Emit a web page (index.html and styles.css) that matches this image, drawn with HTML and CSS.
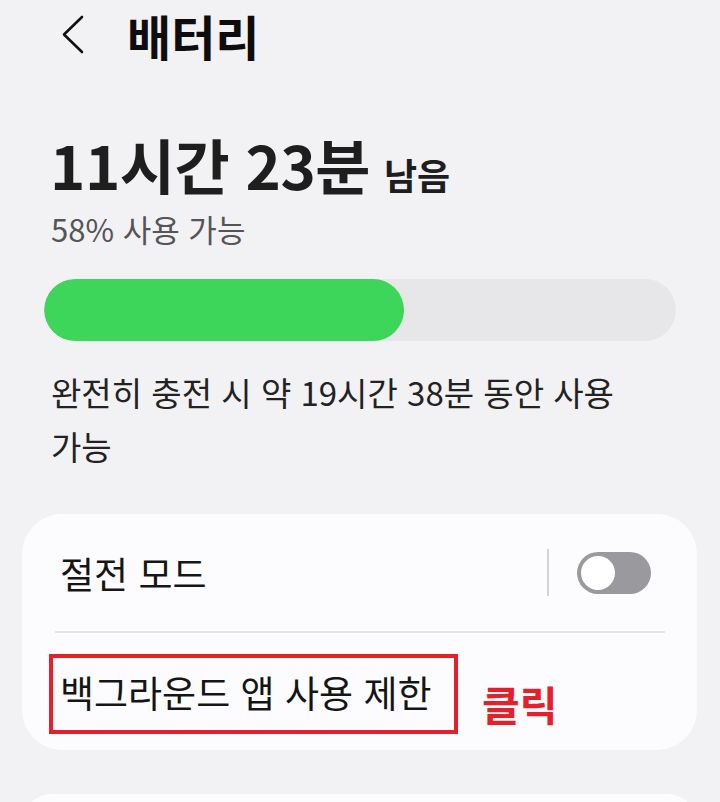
FILE: index.html
```html
<!DOCTYPE html>
<html lang="ko">
<head>
<meta charset="utf-8">
<link rel="stylesheet" href="styles.css">
</head>
<body>
<div class="screen">
  <header class="header">
    <svg class="back" width="24" height="42" viewBox="0 0 24 42"><path d="M20 3 L2 20.5 L20 38" fill="none" stroke="#111" stroke-width="2.6" stroke-linecap="round" stroke-linejoin="round"/></svg>
    <h1 class="title">배터리</h1>
  </header>
  <section class="summary">
    <div class="remain"><span class="big">11시간 23분</span><span class="left">남음</span></div>
    <div class="avail">58% 사용 가능</div>
  </section>
  <div class="bar"><div class="fill" style="width:57%"></div></div>
  <p class="desc">완전히 충전 시 약 19시간 38분 동안 사용 가능</p>
  <div class="card">
    <div class="row row-toggle">
      <span class="label">절전 모드</span>
      <div class="ctrl">
        <span class="vline"></span>
        <span class="toggle"><span class="knob"></span></span>
      </div>
    </div>
    <div class="sep"></div>
    <div class="row row-bg">
      <div class="mark"><span class="label">백그라운드 앱 사용 제한</span></div>
      <span class="click">클릭</span>
    </div>
  </div>
  <div class="card card-next"></div>
</div>
</body>
</html>
```
FILE: styles.css
```css
html, body {
  margin: 0;
  padding: 0;
  background: #f2f2f4;
}
.screen {
  width: 720px;
  height: 802px;
  overflow: hidden;
  font-family: "Noto Sans CJK KR", "Noto Sans", sans-serif;
  color: #1c1c1c;
}
.header {
  height: 70px;
  display: flex;
  align-items: center;
}
.back {
  margin-left: 62px;
  flex: none;
}
.title {
  margin: 0 0 0 41px;
  font-size: 48px;
  font-weight: 700;
  line-height: 70px;
  color: #0d0d0d;
}
.summary {
  margin-top: 63px;
  padding-left: 50px;
}
.remain {
  display: flex;
  align-items: baseline;
  height: 62px;
  line-height: 62px;
}
.big {
  font-size: 60px;
  font-weight: 700;
  letter-spacing: -0.5px;
  color: #1e1e1e;
}
.left {
  font-size: 36px;
  font-weight: 700;
  margin-left: 14px;
  color: #1e1e1e;
}
.avail {
  margin-top: 15px;
  font-size: 31px;
  line-height: 38px;
  color: #555558;
  padding-left: 1px;
}
.bar {
  margin: 31px 0 0 44px;
  width: 632px;
  height: 62px;
  border-radius: 31px;
  background: #e7e7e9;
  overflow: hidden;
}
.fill {
  height: 100%;
  background: #3dd65a;
  border-radius: 31px;
}
.desc {
  margin: 24px 0 0 51px;
  width: 590px;
  font-size: 33px;
  line-height: 54px;
  color: #222;
}
.card {
  margin: 41px 23px 0 22px;
  background: #fcfcfe;
  border-radius: 40px;
}
.row {
  display: flex;
  align-items: center;
}
.row-toggle {
  height: 117px;
  padding: 0 46px 0 38px;
  justify-content: space-between;
}
.label {
  font-size: 37px;
  line-height: 44px;
  color: #151515;
}
.ctrl {
  display: flex;
  align-items: center;
  gap: 28px;
}
.vline {
  width: 2px;
  height: 47px;
  background: #d3d3d6;
}
.toggle {
  width: 74px;
  height: 42px;
  border-radius: 21px;
  background: #9a9a9e;
  display: flex;
  align-items: center;
  padding-left: 4px;
  box-sizing: border-box;
}
.knob {
  width: 34px;
  height: 34px;
  border-radius: 50%;
  background: #fff;
}
.sep {
  height: 2px;
  margin: 0 32px 0 33px;
  background: #e3e3e6;
}
.row-bg {
  padding: 21px 0 16px 27px;
}
.mark {
  width: 409px;
  height: 80px;
  box-sizing: border-box;
  border: 4px solid #e5202a;
  display: flex;
  align-items: center;
  padding: 0 0 4px 7px;
}
.click {
  margin: 18px 0 0 24px;
  font-size: 41px;
  font-weight: 700;
  color: #e5202a;
  line-height: 44px;
}
.card-next {
  margin-top: 44px;
  height: 60px;
}
```
